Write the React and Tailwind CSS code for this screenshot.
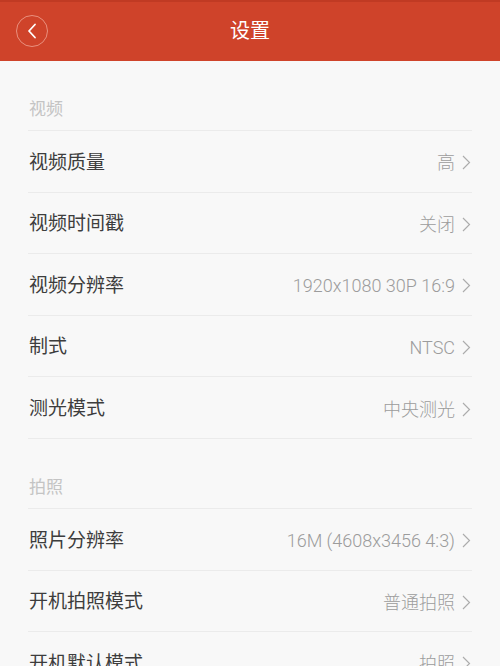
import React from 'react';

const SECTIONS = [
  {
    title: '视频',
    rows: [
      { label: '视频质量', value: '高' },
      { label: '视频时间戳', value: '关闭' },
      { label: '视频分辨率', value: '1920x1080 30P 16:9' },
      { label: '制式', value: 'NTSC' },
      { label: '测光模式', value: '中央测光' },
    ],
  },
  {
    title: '拍照',
    rows: [
      { label: '照片分辨率', value: '16M (4608x3456 4:3)' },
      { label: '开机拍照模式', value: '普通拍照' },
      { label: '开机默认模式', value: '拍照' },
    ],
  },
];

const font = { fontFamily: 'Roboto, "Noto Sans CJK SC", sans-serif' };

function Chevron() {
  return (
    <svg width="9" height="15" viewBox="0 0 9 15" className="ml-[7px] shrink-0">
      <path d="M1 1 L7.5 7.5 L1 14" fill="none" stroke="#acacac" strokeWidth="1.15" />
    </svg>
  );
}

export default function App() {
  return (
    <div className="w-[500px] h-[666px] overflow-hidden bg-[#f8f8f8]" style={font}>
      {/* Header */}
      <div className="relative h-[61px] bg-[#cf432a] flex items-center justify-center border-t-2 border-[#c03a23]">
        <button className="absolute left-[16px] top-[13px] w-[32px] h-[32px] rounded-full border border-[#e9907e] flex items-center justify-center">
          <svg width="10" height="16" viewBox="0 0 10 16">
            <path d="M8 1.5 L2 8 L8 14.5" fill="none" stroke="#ffffff" strokeWidth="1.8" strokeLinecap="round" strokeLinejoin="round" />
          </svg>
        </button>
        <h1 className="text-[20px] text-white font-normal leading-none -mt-[2px]">设置</h1>
      </div>

      {/* Settings list */}
      <div className="px-[28px]">
        {SECTIONS.map((section) => (
          <div key={section.title}>
            <div className="h-[70px] flex items-end pb-[9px] border-b border-[#ebebeb]">
              <span className="text-[17px] leading-[24px] text-[#c4c4c4] pl-[1px]">{section.title}</span>
            </div>
            {section.rows.map((row) => (
              <div
                key={row.label}
                className="h-[61.6px] pt-[3px] flex items-center justify-between border-b border-[#ebebeb]"
              >
                <span className="text-[19px] text-[#3d3d3d] pl-[1px]">{row.label}</span>
                <div className="flex items-center pr-[1px]">
                  <span className="text-[18px] font-light text-[#9c9c9c]">{row.value}</span>
                  <Chevron />
                </div>
              </div>
            ))}
          </div>
        ))}
      </div>
    </div>
  );
}
